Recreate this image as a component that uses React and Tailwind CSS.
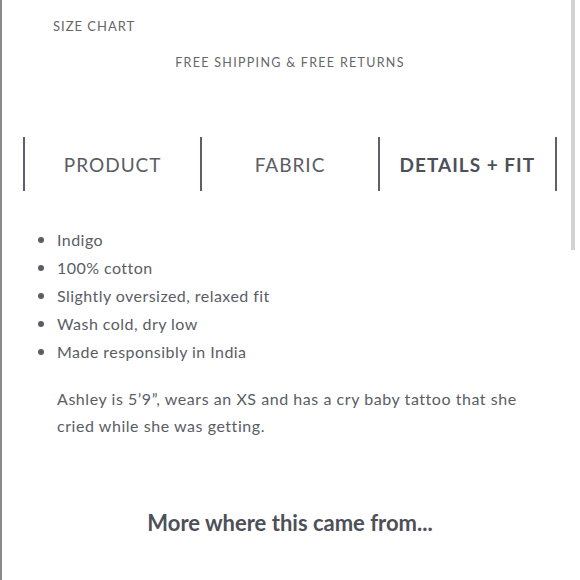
import React from 'react';

const bullets = [
    'Indigo',
    '100% cotton',
    'Slightly oversized, relaxed fit',
    'Wash cold, dry low',
    'Made responsibly in India',
];

const tabs = [
    { label: 'PRODUCT', active: false },
    { label: 'FABRIC', active: false },
    { label: 'DETAILS + FIT', active: true },
];

const App = () => {
    return (
        <div className="flex h-[580px] w-[580px] overflow-hidden bg-white font-['Lato',sans-serif] text-[#5a5d65]">
            <div className="w-[2px] shrink-0 bg-[#8a8a8a]" />
            <div className="w-[569px] shrink-0">
                <div className="ml-[21px] w-[534px]">
                    <div className="pl-[30px] pt-[18px] text-[13px] leading-4 tracking-[1px] text-[#666]">SIZE CHART</div>
                    <div className="mt-[21px] text-center text-[12.5px] leading-4 tracking-[1.3px] text-[#666]">
                        FREE SHIPPING &amp; FREE RETURNS
                    </div>

                    <div className="mt-[66px] flex">
                        {tabs.map((tab, i) => (
                            <button
                                key={tab.label}
                                className={`flex h-[54px] items-center justify-center border-l-2 border-[#5d6068] text-[19px] tracking-[1px] ${
                                    i === tabs.length - 1 ? 'w-[180px] border-r-2' : 'w-[178px]'
                                } ${tab.active ? 'font-bold text-[#4d5058]' : 'text-[#5a5d65]'}`}
                            >
                                <span className="pt-[2px]">{tab.label}</span>
                            </button>
                        ))}
                    </div>

                    <ul className="mt-[35px] pl-[34px] text-[16px] leading-[28px] tracking-[0.45px]">
                        {bullets.map((b) => (
                            <li key={b} className="relative">
                                <span className="absolute left-[-19px] top-[11px] h-[6px] w-[6px] rounded-full bg-[#5a5d65]" />
                                {b}
                            </li>
                        ))}
                    </ul>

                    <p className="mt-[19px] w-[500px] pl-[34px] text-[16px] leading-[27px] tracking-[0.55px]">
                        Ashley is 5’9”, wears an XS and has a cry baby tattoo that she cried while she was getting.
                    </p>

                    <h2 className="mt-[70px] text-center text-[22px] font-bold leading-[28px] text-[#4d5058]">
                        More where this came from...
                    </h2>
                </div>
            </div>
            <div className="w-[9px] shrink-0">
                <div className="h-[250px] w-[4px] bg-[#d3d3d3]" />
            </div>
        </div>
    );
};

export default App;
